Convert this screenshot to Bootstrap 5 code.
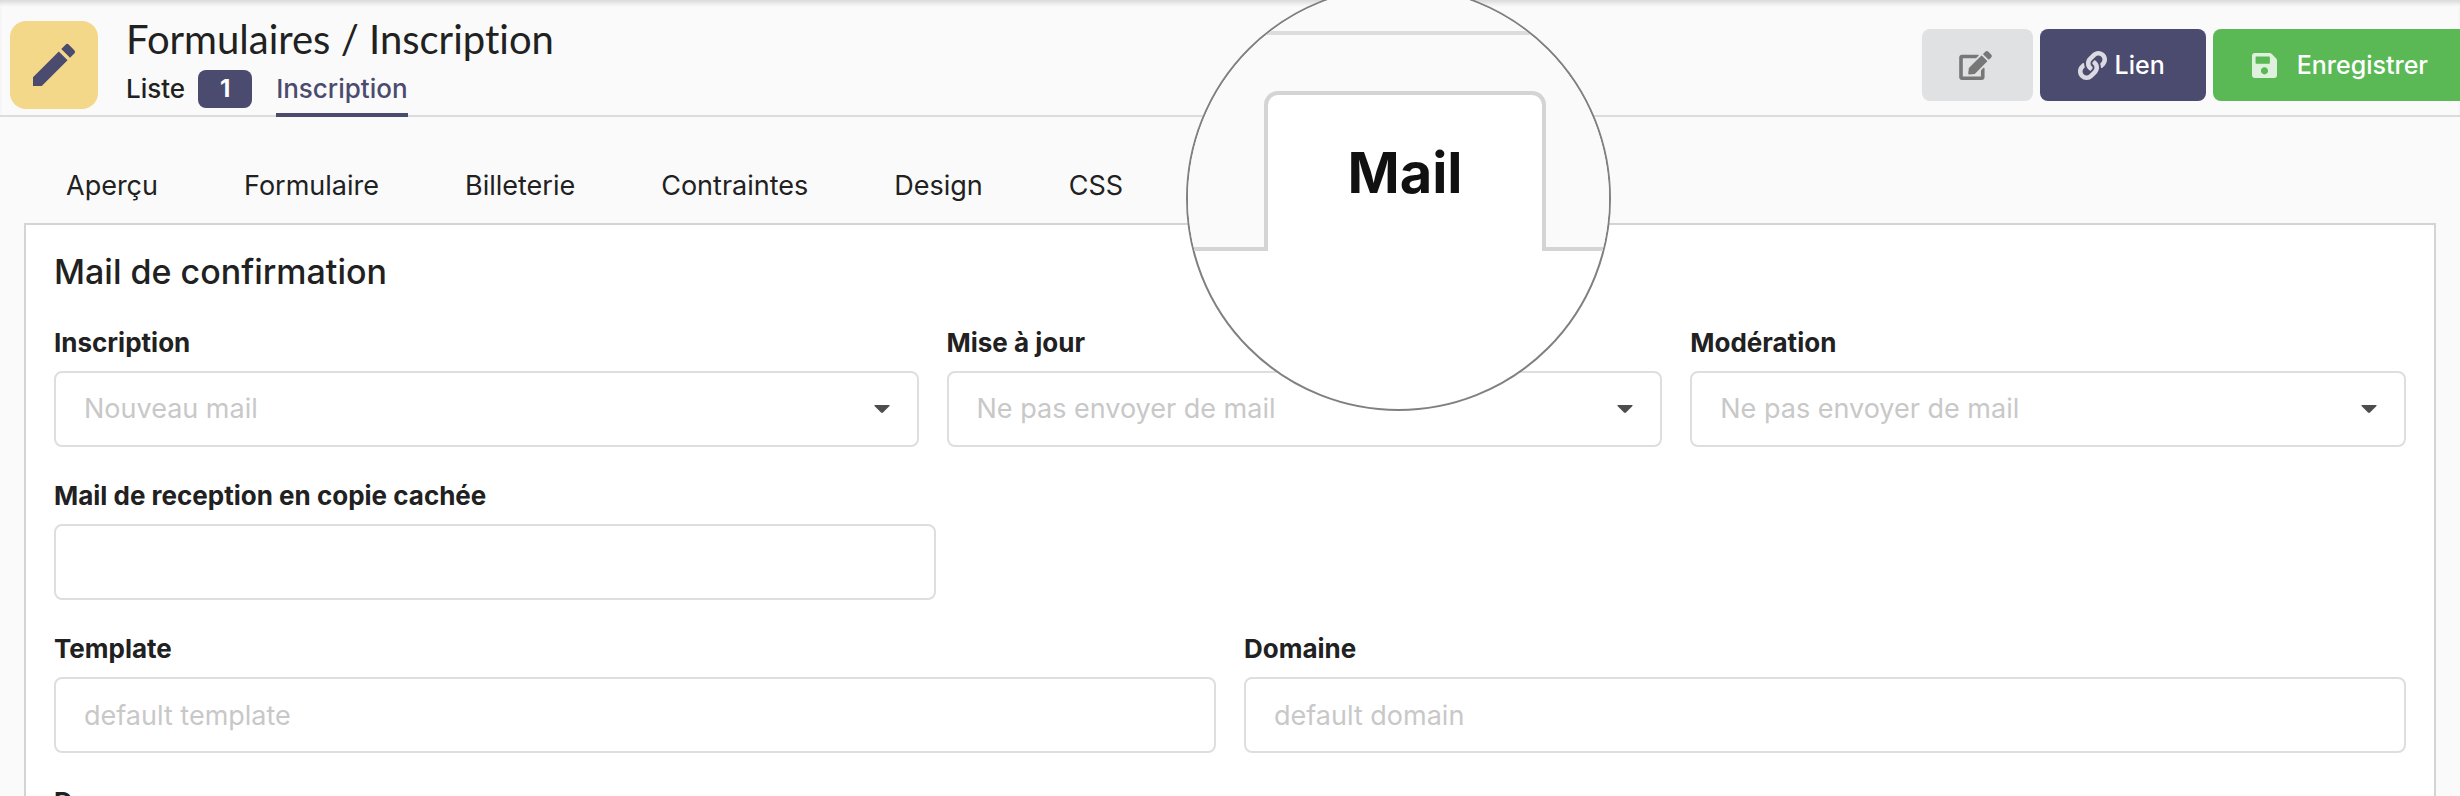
<!DOCTYPE html>
<html lang="fr">
<head>
<meta charset="utf-8">
<meta name="viewport" content="width=device-width, initial-scale=1">
<title>Formulaires / Inscription</title>
<link href="https://cdn.jsdelivr.net/npm/bootstrap@5.3.0/dist/css/bootstrap.min.css" rel="stylesheet">
<style>
  :root { --brand: #4b4a6f; --line: #d4d4d5; --field-line: #dedede; }
  body { font-family: Inter, "Liberation Sans", sans-serif; font-size: 27px; line-height: 36px; color: #212121; background: #fafafa; overflow: hidden; }
  .app-top { padding: 21px 0 6px 10px; border-bottom: 2px solid #dcdcdc; box-shadow: inset 0 5px 4px -2px #d8d8d8; }
  .app-tile { width: 88px; height: 88px; border-radius: 16px; background: #f3d88a; }
  .app-title { font-family: Lato, sans-serif; font-size: 40px; line-height: 36px; font-weight: 400; font-variant-ligatures: none; margin: 0 0 8px; }
  .crumbs { height: 48px; margin-bottom: -8px; font-size: 26px; font-weight: 500; }
  .crumbs a { color: inherit; text-decoration: none; }
  .crumbs .here { color: var(--brand); border-bottom: 4px solid var(--brand); height: 52px; padding-top: 6px; }
  .count { width: 54px; height: 38px; margin-left: 13px; border-radius: 8px; background: var(--brand); color: #fff; font-size: 24px; font-weight: 700; }
  .tools { gap: 7px; }
  .tool { height: 72px; border: 0; border-radius: 8px; font-size: 25px; font-weight: 500; display: inline-flex; align-items: center; white-space: nowrap; flex-shrink: 0; }
  .tool-edit { background: #e0e1e2; color: #777; padding: 0 41px 0 37px; }
  .tool-link { background: var(--brand); color: #fff; padding: 0 41px 0 38px; gap: 8px; }
  .tool-save { background: #5ab955; color: #fff; padding: 0 40px 0 39px; gap: 20px; margin-right: -8px; }
  .tool svg { opacity: .8; }
  .tool-edit svg { opacity: 1; }
  .form-tabs { margin: 48px 24px 0; column-gap: 2px; }
  .form-tabs .nav-link { color: #212121; padding: 3px 42px 19px; line-height: 36px; }
  .panel { margin: 0 24px; padding: 27px 28px; background: #fff; border: 2px solid var(--line); }
  .panel h2 { font-size: 34px; line-height: 40px; font-weight: 500; margin: 0 0 35px; }
  .fields { --bs-gutter-x: 28px; margin-bottom: 33px; }
  .w-six { width: 37.5%; } .w-five { width: 31.25%; }
  .fields label { display: block; font-size: 26px; line-height: 32px; font-weight: 700; margin-bottom: 12px; }
  .fields .form-control, .fields .form-select { height: 76px; padding: 0 28px; border: 2px solid var(--field-line); border-radius: 8px; font-size: 27px; background-color: #fff; color: #c8c8c8; }
  .form-control::placeholder { color: #c8c8c8; }
  .fields .form-select { background-image: url("data:image/svg+xml,%3Csvg xmlns='http://www.w3.org/2000/svg' viewBox='0 0 16 8'%3E%3Cpath d='M1 0h14q1 0 .5 1L9 7.500q-1 .8-2 0L.5 1Q0 0 1 0z' fill='%234d4d4d'/%3E%3C/svg%3E"); background-size: 16px 8px; background-position: right 27px center; }
  .loupe { position: absolute; top: -14px; left: 1186px; width: 425px; height: 425px; border: 2px solid #808080; border-radius: 50%; background: #fff; overflow: hidden; }
  .loupe-bar { height: 47px; border-bottom: 4px solid #dcdcdc; background: #fafafa; }
  .loupe-tabs { height: 216px; padding-top: 56px; background: linear-gradient(var(--line), var(--line)) bottom / 100% 4px no-repeat #fafafa; }
  .loupe-tabs button { display: block; width: 282px; height: 160px; margin-left: 76px; padding: 0; border: 4px solid var(--line); border-bottom: 0; border-radius: 14px 14px 0 0; background: #fff; color: #111; font-size: 56px; line-height: 64px; font-weight: 700; }
</style>
</head>
<body>
<header class="app-top d-flex justify-content-between">
  <div class="d-flex">
    <div class="app-tile d-flex align-items-center justify-content-center">
      <svg width="56" height="56" viewBox="0 0 24 24" fill="#4b4a6f" aria-hidden="true"><path d="M3 17.250V21h3.750L17.810 9.940l-3.750-3.750L3 17.250zM20.710 7.040a1 1 0 0 0 0-1.410l-2.340-2.340a1 1 0 0 0-1.410 0l-1.830 1.830 3.750 3.750 1.830-1.830z"/></svg>
    </div>
    <div class="ms-4 ps-1">
      <h1 class="app-title">Formulaires / Inscription</h1>
      <nav class="crumbs d-flex" aria-label="Pages">
        <a href="#" class="d-flex align-items-center me-4">Liste <span class="count d-flex align-items-center justify-content-center">1</span></a>
        <a href="#" class="here" aria-current="page">Inscription</a>
      </nav>
    </div>
  </div>
  <div class="d-flex pt-2 tools">
    <button type="button" class="tool tool-edit" aria-label="Modifier"><svg width="33" height="29" viewBox="0 0 576 512" fill="currentColor"><path d="M402.600 83.200l90.200 90.200c3.800 3.800 3.800 10 0 13.800L274.400 405.600l-92.800 10.300c-12.400 1.400-22.900-9.100-21.500-21.500l10.300-92.800L388.800 83.200c3.800-3.800 10-3.800 13.800 0zm162-22.900l-48.800-48.800c-15.200-15.200-39.900-15.200-55.200 0l-35.400 35.400c-3.800 3.800-3.800 10 0 13.800l90.200 90.200c3.800 3.800 10 3.800 13.800 0l35.400-35.400c15.200-15.300 15.200-40 0-55.200zM384 346.200V448H64V128h229.800c3.200 0 6.200-1.300 8.500-3.500l40-40c7.600-7.600 2.200-20.500-8.500-20.500H48C21.500 64 0 85.500 0 112v352c0 26.500 21.500 48 48 48h352c26.500 0 48-21.500 48-48V306.200c0-10.700-12.900-16-20.500-8.500l-40 40c-2.200 2.300-3.500 5.300-3.500 8.500z"/></svg></button>
    <button type="button" class="tool tool-link"><svg width="29" height="29" viewBox="0 0 512 512" fill="currentColor"><path d="M326.612 185.391c59.747 59.809 58.927 155.698.36 214.590-.110.120-.240.250-.360.370l-67.200 67.200c-59.270 59.270-155.699 59.262-214.960 0-59.270-59.260-59.270-155.700 0-214.960l37.106-37.106c9.840-9.840 26.786-3.300 27.294 10.606.648 17.722 3.826 35.527 9.690 52.721 1.986 5.822.567 12.262-3.783 16.612l-13.087 13.087c-28.026 28.026-28.905 73.660-1.155 101.960 28.024 28.579 74.086 28.749 102.325.510l67.200-67.190c28.191-28.191 28.073-73.757 0-101.830-3.701-3.694-7.429-6.564-10.341-8.569a16.037 16.037 0 0 1-6.947-12.606c-.396-10.567 3.348-21.456 11.698-29.806l21.054-21.055c5.521-5.521 14.182-6.199 20.584-1.731a152.482 152.482 0 0 1 20.522 17.197zM467.547 44.449c-59.261-59.262-155.690-59.270-214.960 0l-67.200 67.200c-.120.120-.250.250-.360.370-58.566 58.892-59.387 154.781.360 214.590a152.454 152.454 0 0 0 20.521 17.196c6.402 4.468 15.064 3.789 20.584-1.731l21.054-21.055c8.350-8.350 12.094-19.239 11.698-29.806a16.037 16.037 0 0 0-6.947-12.606c-2.912-2.005-6.640-4.875-10.341-8.569-28.073-28.073-28.191-73.639 0-101.830l67.200-67.190c28.239-28.239 74.300-28.069 102.325.510 27.750 28.300 26.872 73.934-1.155 101.960l-13.087 13.087c-4.350 4.350-5.769 10.790-3.783 16.612 5.864 17.194 9.042 34.999 9.690 52.721.509 13.906 17.454 20.446 27.294 10.606l37.106-37.106c59.271-59.259 59.271-155.699.001-214.959z"/></svg>Lien</button>
    <button type="button" class="tool tool-save"><svg width="25" height="29" viewBox="0 0 448 512" fill="currentColor"><path d="M433.941 129.941l-83.882-83.882A48 48 0 0 0 316.118 32H48C21.490 32 0 53.490 0 80v352c0 26.510 21.490 48 48 48h352c26.510 0 48-21.490 48-48V163.882a48 48 0 0 0-14.059-33.941zM224 416c-35.346 0-64-28.654-64-64 0-35.346 28.654-64 64-64s64 28.654 64 64c0 35.346-28.654 64-64 64zm96-304.520V212c0 6.627-5.373 12-12 12H76c-6.627 0-12-5.373-12-12V108c0-6.627 5.373-12 12-12h228.520c3.183 0 6.235 1.264 8.485 3.515l3.480 3.480A11.996 11.996 0 0 1 320 111.480z"/></svg>Enregistrer</button>
  </div>
</header>

<main>
  <nav class="form-tabs nav" aria-label="Sections">
    <a class="nav-link" href="#">Aperçu</a>
    <a class="nav-link" href="#">Formulaire</a>
    <a class="nav-link" href="#">Billeterie</a>
    <a class="nav-link" href="#">Contraintes</a>
    <a class="nav-link" href="#">Design</a>
    <a class="nav-link" href="#">CSS</a>
  </nav>
  <form class="panel">
    <h2>Mail de confirmation</h2>
    <div class="row fields">
      <div class="w-six"><label for="insc">Inscription</label><select id="insc" class="form-select"><option>Nouveau mail</option></select></div>
      <div class="w-five"><label for="maj">Mise à jour</label><select id="maj" class="form-select"><option>Ne pas envoyer de mail</option></select></div>
      <div class="w-five"><label for="mod">Modération</label><select id="mod" class="form-select"><option>Ne pas envoyer de mail</option></select></div>
    </div>
    <div class="fields"><label for="bcc">Mail de reception en copie cachée</label><input id="bcc" type="text" class="form-control w-six"></div>
    <div class="row fields">
      <div class="col-6"><label for="tpl">Template</label><input id="tpl" type="text" class="form-control" placeholder="default template"></div>
      <div class="col-6"><label for="dom">Domaine</label><input id="dom" type="text" class="form-control" placeholder="default domain"></div>
    </div>
    <div class="fields"><label for="from">De</label><input id="from" type="text" class="form-control"></div>
  </form>
</main>

<div class="loupe">
  <div class="loupe-bar"></div>
  <div class="loupe-tabs"><button type="button">Mail</button></div>
</div>
<script src="https://cdn.jsdelivr.net/npm/bootstrap@5.3.0/dist/js/bootstrap.bundle.min.js"></script>
</body>
</html>
